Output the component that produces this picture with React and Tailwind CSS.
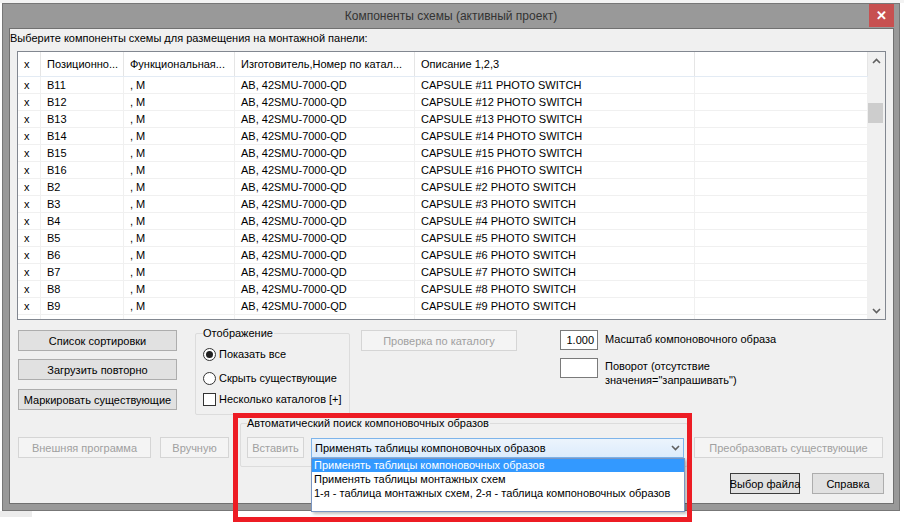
import React from "react";

const rows = [
  ["B11", "#11"],
  ["B12", "#12"],
  ["B13", "#13"],
  ["B14", "#14"],
  ["B15", "#15"],
  ["B16", "#16"],
  ["B2", "#2"],
  ["B3", "#3"],
  ["B4", "#4"],
  ["B5", "#5"],
  ["B6", "#6"],
  ["B7", "#7"],
  ["B8", "#8"],
  ["B9", "#9"],
];

const cols = ["w-[23px]", "w-[83px]", "w-[111px]", "w-[180px]", "w-[280px]", "flex-1"];

function Btn({ children, className = "", disabled }) {
  return (
    <button
      className={
        "flex items-center justify-center h-[21px] border text-[11px] leading-[14px] whitespace-nowrap shrink-0 " +
        (disabled
          ? "bg-[#f4f4f4] border-[#d5d5d5] text-[#a0a0a0] "
          : "bg-[#e1e1e1] border-[#adadad] text-black ") +
        className
      }
    >
      {children}
    </button>
  );
}

function Chevron({ down }) {
  return (
    <svg width="9" height="6" viewBox="0 0 9 6">
      <polyline
        points={down ? "1,1 4.5,4.5 8,1" : "1,5 4.5,1.5 8,5"}
        fill="none"
        stroke="#606060"
        strokeWidth="1.6"
      />
    </svg>
  );
}

function Radio({ checked, label }) {
  return (
    <div className="flex items-center h-[14px]">
      <div className="w-[13px] h-[13px] rounded-full border border-[#333] bg-white flex items-center justify-center shrink-0">
        {checked && <div className="w-[7px] h-[7px] rounded-full bg-[#222]" />}
      </div>
      <span className="ml-[3px] whitespace-nowrap">{label}</span>
    </div>
  );
}

export default function App() {
  return (
    <div className="relative w-[904px] h-[522px] bg-white overflow-hidden font-['Liberation_Sans',Arial,sans-serif] text-[11px] text-black">
      <div className="h-[3px] bg-[#f3f3f3]" />
      <div className="ml-[2px] w-[898px] h-[508px] bg-[#999999] border border-[#777] flex flex-col">
        {/* title bar */}
        <div className="relative h-[24px] flex items-center justify-center text-[12px] text-[#333]">
          Компоненты схемы (активный проект)
          <div className="absolute right-[5px] top-0 w-[25px] h-[23px] bg-[#c75050] flex items-center justify-center text-white text-[13px] font-bold">
            ✕
          </div>
        </div>

        {/* client area */}
        <div className="ml-[6px] w-[885px] h-[476px] bg-[#f0f0f0] border border-[#707070] flex flex-col">
          <div className="h-[22px] pt-[2px] leading-[14px] whitespace-nowrap">
            Выберите компоненты схемы для размещения на монтажной панели:
          </div>

          {/* list view */}
          <div className="ml-[7px] w-[869px] h-[269px] border border-[#828790] bg-white flex">
            <div className="w-[850px] flex flex-col overflow-hidden">
              <div className="flex h-[25px] border-b border-[#e3ebf4] shrink-0">
                {["x", "Позиционно...", "Функциональная...", "Изготовитель,Номер по катал...", "Описание 1,2,3", ""].map(
                  (h, i) => (
                    <div
                      key={i}
                      className={cols[i] + " shrink-0 border-r border-[#e5e5e5] pl-[6px] flex items-center whitespace-nowrap overflow-hidden"}
                    >
                      {h}
                    </div>
                  )
                )}
              </div>
              {rows.map(([pos, n]) => (
                <div key={pos} className="flex h-[17px] border-b border-[#f0f0f0] shrink-0">
                  {["x", pos, ", M", "AB, 42SMU-7000-QD", `CAPSULE ${n} PHOTO SWITCH`, ""].map((c, i) => (
                    <div
                      key={i}
                      className={cols[i] + " shrink-0 border-r border-[#f0f0f0] pl-[6px] flex items-center whitespace-nowrap"}
                    >
                      {c}
                    </div>
                  ))}
                </div>
              ))}
              <div className="flex flex-1">
                {cols.map((c, i) => (
                  <div key={i} className={c + " shrink-0 border-r border-[#f0f0f0]"} />
                ))}
              </div>
            </div>
            <div className="w-[17px] bg-[#f0f0f0] flex flex-col">
              <div className="h-[17px] flex items-center justify-center">
                <Chevron />
              </div>
              <div className="mt-[34px] w-[15px] h-[20px] bg-[#cdcdcd]" />
              <div className="flex-1" />
              <div className="h-[17px] flex items-center justify-center">
                <Chevron down />
              </div>
            </div>
          </div>

          {/* middle section */}
          <div className="flex items-start h-[95px]">
            <div className="ml-[8px] mt-[10px] flex flex-col">
              <Btn className="w-[159px]">Список сортировки</Btn>
              <Btn className="w-[159px] mt-[8px]">Загрузить повторно</Btn>
              <Btn className="w-[159px] mt-[9px]">Маркировать существующие</Btn>
            </div>

            <div className="relative ml-[18px] mt-[13px] w-[155px] h-[82px] border border-[#dcdcdc] rounded-[2px] pl-[7px] pt-[13px]">
              <span className="absolute left-[7px] -top-[8px] bg-[#f0f0f0] pr-[1px] leading-[14px] whitespace-nowrap">
                Отображение
              </span>
              <Radio checked label="Показать все" />
              <div className="mt-[10px]">
                <Radio label="Скрыть существующие" />
              </div>
              <div className="mt-[7px] flex items-center h-[14px]">
                <div className="w-[13px] h-[13px] border border-[#333] bg-white shrink-0" />
                <span className="ml-[3px] whitespace-nowrap">Несколько каталогов [+]</span>
              </div>
            </div>

            <Btn disabled className="ml-[11px] mt-[10px] w-[156px]">
              Проверка по каталогу
            </Btn>

            <div className="ml-[43px] mt-[10px] flex flex-col">
              <div className="w-[38px] h-[20px] bg-white border border-[#7a7a7a] flex items-center justify-end pr-[3px]">
                1.000
              </div>
              <div className="mt-[8px] w-[38px] h-[20px] bg-white border border-[#7a7a7a]" />
            </div>

            <div className="ml-[7px] mt-[12px] flex flex-col leading-[14px] whitespace-nowrap">
              <div>Масштаб компоновочного образа</div>
              <div className="mt-[13px]">Поворот (отсутствие</div>
              <div>значения="запрашивать")</div>
            </div>
          </div>

          {/* bottom section */}
          <div className="flex items-start">
            <Btn disabled className="ml-[8px] mt-[22px] w-[133px]">
              Внешняя программа
            </Btn>
            <Btn disabled className="ml-[9px] mt-[22px] w-[69px]">
              Вручную
            </Btn>

            <div className="relative ml-[11px] mt-[8px] w-[448px] h-[44px] border border-[#dcdcdc] rounded-[2px] flex items-start pl-[6px] pt-[13px]">
              <span className="absolute left-[6px] -top-[8px] bg-[#f0f0f0] pr-[1px] leading-[14px] whitespace-nowrap">
                Автоматический поиск компоновочных образов
              </span>
              <Btn disabled className="w-[57px]">
                Вставить
              </Btn>
              <div className="relative ml-[7px] mt-[1px] w-[373px] h-[20px] border border-[#7eb4ea] bg-gradient-to-b from-[#ecf4fc] to-[#dcecfc] flex items-center pl-[3px]">
                <span className="flex-1 whitespace-nowrap">Применять таблицы компоновочных образов</span>
                <span className="mr-[3px] flex items-center">
                  <Chevron down />
                </span>
                <div className="absolute left-[-1px] top-[19px] w-[374px] h-[54px] bg-white border border-[#7a96c2] shadow-[2px_2px_3px_rgba(0,0,0,0.25)] flex flex-col leading-[13px] whitespace-nowrap z-10">
                  <div className="h-[13px] bg-[#3399ff] text-white pl-[2px]">Применять таблицы компоновочных образов</div>
                  <div className="h-[14px] pt-[1px] pl-[2px]">Применять таблицы монтажных схем</div>
                  <div className="h-[13px] pt-[1px] pl-[2px]">1-я - таблица монтажных схем, 2-я - таблица компоновочных образов</div>
                </div>
              </div>
            </div>

            <Btn disabled className="ml-[6px] mt-[22px] w-[189px]">
              Преобразовать существующие
            </Btn>
          </div>

          <div className="flex justify-end pr-[9px] mt-[6px]">
            <Btn className="w-[70px] !border-[#3c3c3c]">Выбор файла</Btn>
            <Btn className="ml-[12px] w-[72px]">Справка</Btn>
          </div>
        </div>
      </div>
      <div className="w-[32px] h-[6px] bg-[#ececec]" />

      {/* red annotation frame */}
      <div className="absolute left-[233px] top-[413px] w-[459px] h-[109px] border-[5px] border-[#ed1c24] z-20 pointer-events-none" />
    </div>
  );
}
